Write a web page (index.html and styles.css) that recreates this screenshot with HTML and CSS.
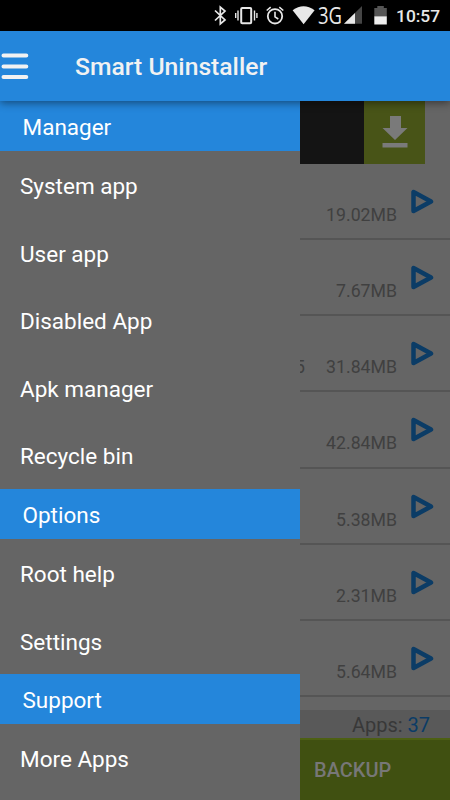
FILE: index.html
```
<!DOCTYPE html>
<html lang="en">
<head>
  <meta charset="UTF-8">
  <title>Smart Uninstaller</title>
  <link rel="stylesheet" href="styles.css">
</head>
<body>

  <div class="status-bar">
    <svg class="status-icons" width="180" height="31" viewBox="0 0 180 31">
      <!-- bluetooth -->
      <path d="M5 10.5 L15 20 L10.3 24 V7 L15 11 L5 20.5" fill="none" stroke="#e8e8e8" stroke-width="1.7"/>
      <!-- vibrate -->
      <rect x="31.2" y="8" width="10" height="15.3" rx="1" fill="none" stroke="#e8e8e8" stroke-width="2"/>
      <path d="M28 10.5v10M25.7 13v5M44.5 10.5v10M46.9 13v5" stroke="#e8e8e8" stroke-width="1.4"/>
      <!-- alarm -->
      <circle cx="65" cy="16.3" r="7.2" fill="none" stroke="#e8e8e8" stroke-width="1.8"/>
      <path d="M65 11.8v5l3.3 2.2M56.7 10.5l4-3.3M73.3 10.5l-4-3.3" fill="none" stroke="#e8e8e8" stroke-width="1.6"/>
      <!-- wifi -->
      <path d="M82.6 10.2 Q93.5 2.2 104.6 10.2 L93.6 24.3z" fill="#e8e8e8"/>
      <text x="108" y="23.5" class="network" textLength="24" lengthAdjust="spacingAndGlyphs">3G</text>
      <!-- signal -->
      <path d="M152 6v17.7h-18z" fill="#454545"/>
      <path d="M145 13v10.7h-11z" fill="#e8e8e8"/>
      <!-- battery -->
      <path d="M164.3 8h3V6h6.5v2h3v8.5h-12.5z" fill="#555"/>
      <path d="M164.3 16.3h12.5v8.2h-12.5z" fill="#eee"/>
    </svg>
    <span class="clock">10:57</span>
  </div>

  <header class="app-bar">
    <svg class="menu-icon" width="28" height="28" viewBox="0 0 28 28">
      <path d="M2.5 3.5h22.8M2.5 14.5h22.8M2.5 25h22.8" stroke="#f2f2f2" stroke-width="4" stroke-linecap="round"/>
    </svg>
    <h1>Smart Uninstaller</h1>
  </header>

  <div class="main">
    <nav class="drawer">
      <h2>Manager</h2>
      <a>System app</a>
      <a>User app</a>
      <a>Disabled App</a>
      <a>Apk manager</a>
      <a>Recycle bin</a>
      <h2>Options</h2>
      <a>Root help</a>
      <a>Settings</a>
      <h2>Support</h2>
      <a>More Apps</a>
    </nav>

    <div class="content">
      <div class="banner">
        <div class="banner-ad"></div>
        <div class="download">
          <svg width="26" height="32" viewBox="0 0 26 32">
            <path d="M8 0h11v12h6.5L13 24 .5 12H8zM.5 27h25v4.5H.5z" fill="#7a7a7a"/>
          </svg>
        </div>
      </div>

      <svg class="defs" width="0" height="0">
        <symbol id="play" viewBox="0 0 23 25">
          <path d="M2.5 3v19L20 12.5z" fill="none" stroke="#0b3c66" stroke-width="4.5" stroke-linejoin="round"/>
        </symbol>
      </svg>

      <div class="row"><span class="size">19.02MB</span><svg class="play"><use href="#play"/></svg></div>
      <div class="row"><span class="size">7.67MB</span><svg class="play"><use href="#play"/></svg></div>
      <div class="row"><span class="version">5</span><span class="size">31.84MB</span><svg class="play"><use href="#play"/></svg></div>
      <div class="row"><span class="size">42.84MB</span><svg class="play"><use href="#play"/></svg></div>
      <div class="row"><span class="size">5.38MB</span><svg class="play"><use href="#play"/></svg></div>
      <div class="row"><span class="size">2.31MB</span><svg class="play"><use href="#play"/></svg></div>
      <div class="row"><span class="size">5.64MB</span><svg class="play"><use href="#play"/></svg></div>

      <div class="count">Apps:&nbsp;<b>37</b></div>
      <div class="backup">BACKUP</div>
    </div>
  </div>

</body>
</html>
```
FILE: styles.css
```
* {
  box-sizing: border-box;
}

body {
  margin: 0;
  width: 450px;
  height: 800px;
  overflow: hidden;
  background: #656565;
  font-family: Roboto, sans-serif;
}

.status-bar {
  display: flex;
  height: 31px;
  background: #000;
  padding-left: 210px;
  color: #e8e8e8;
}

.status-icons {
  flex: none;
}

.network {
  font-size: 23px;
  font-family: "Open Sans", sans-serif;
  fill: #e8e8e8;
}

.clock {
  margin-left: 6px;
  font-size: 17.4px;
  font-weight: 500;
  line-height: 33px;
}

.app-bar {
  position: relative;
  display: flex;
  align-items: center;
  height: 70px;
  background: #2486db;
  box-shadow: 0 2px 8px rgba(0, 0, 0, 0.45);
}

.menu-icon {
  margin-left: 1px;
}

h1 {
  margin: 1px 0 0 46px;
  font-size: 24.7px;
  font-weight: 500;
  color: #f2f2f2;
}

.main {
  display: flex;
  height: 699px;
}

.drawer {
  width: 300px;
  background: #656565;
}

.drawer h2 {
  height: 50.3px;
  margin: 0;
  padding: 2px 0 0 22.5px;
  background: #2486db;
  color: #fff;
  font-size: 22.5px;
  font-weight: 400;
  line-height: 49px;
}

.drawer a {
  display: block;
  height: 67.5px;
  padding: 2px 0 0 20px;
  color: #fff;
  font-size: 22.5px;
  line-height: 66px;
}

.content {
  width: 150px;
  overflow: hidden;
}

.banner {
  display: flex;
  height: 62.5px;
}

.banner-ad {
  width: 64px;
  background: #141414;
}

.download {
  display: flex;
  align-items: center;
  justify-content: center;
  width: 61px;
  background: #485417;
}

.defs {
  display: block;
}

.row {
  display: flex;
  justify-content: flex-end;
  height: 76.25px;
  padding-right: 16px;
  border-bottom: 2px solid #555;
  color: #404040;
  font-size: 17.7px;
}

.size {
  margin-top: 41px;
}

/* most of this text is under the drawer */
.version {
  margin: 41px auto 0 -5px;
}

.play {
  width: 23px;
  height: 25px;
  margin: 25px 0 0 14px;
}

.count {
  height: 27.5px;
  margin-top: 13px;
  padding-right: 20px;
  background: #595959;
  color: #383838;
  font-size: 20px;
  line-height: 30px;
  text-align: right;
}

.count b {
  color: #0b3c66;
  font-weight: 400;
}

.backup {
  height: 62px;
  border-top: 2px solid #4d6013;
  padding-left: 14px;
  background: #405011;
  color: #777;
  font-size: 20px;
  font-weight: 500;
  line-height: 60px;
}
```
